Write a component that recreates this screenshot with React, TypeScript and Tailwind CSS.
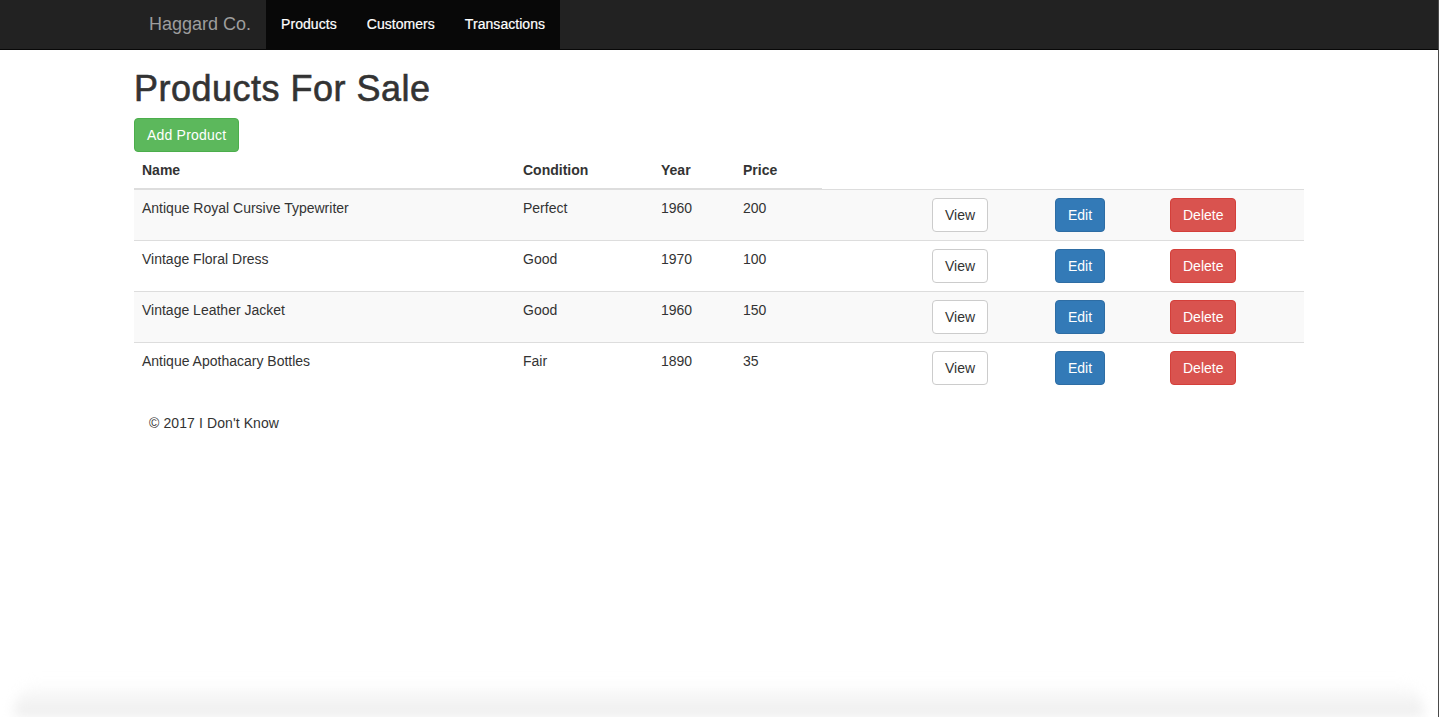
const products = [
  { name: 'Antique Royal Cursive Typewriter', condition: 'Perfect', year: 1960, price: 200 },
  { name: 'Vintage Floral Dress', condition: 'Good', year: 1970, price: 100 },
  { name: 'Vintage Leather Jacket', condition: 'Good', year: 1960, price: 150 },
  { name: 'Antique Apothacary Bottles', condition: 'Fair', year: 1890, price: 35 },
];

const btn = 'inline-block rounded-[4px] border px-[12px] py-[6px] text-[14px] leading-[20px]';

export default function App() {
  return (
    <div className="flex min-h-screen bg-white font-['Liberation_Sans',Arial,sans-serif] text-[14px] leading-[20px] text-[#333]">
      <div className="relative w-[1438px]">
        {/* navbar */}
        <nav className="h-[50px] border-b border-[#080808] bg-[#222]">
          <div className="mx-auto flex h-[49px] w-[1170px]">
            <a className="px-[15px] text-[18px] leading-[49px] text-[#9d9d9d]">Haggard Co.</a>
            <ul className="flex bg-[#080808]">
              <li><a className="block px-[15px] leading-[49px] tracking-[0.05px] text-white [-webkit-text-stroke:0.2px_#fff]">Products</a></li>
              <li><a className="block px-[15px] leading-[49px] tracking-[0.05px] text-white [-webkit-text-stroke:0.2px_#fff]">Customers</a></li>
              <li><a className="block px-[15px] leading-[49px] tracking-[0.05px] text-white [-webkit-text-stroke:0.2px_#fff]">Transactions</a></li>
            </ul>
          </div>
        </nav>

        <main className="mx-auto w-[1170px]">
          <h1 className="mt-[19px] mb-[10px] text-[36px] leading-[39px] font-medium tracking-[0.5px] [-webkit-text-stroke:0.6px_#333]">Products For Sale</h1>
          <button className={`${btn} border-[#4cae4c] bg-[#5cb85c] tracking-[0.2px] text-white`}>Add Product</button>

          <table className="mb-[20px] w-full border-collapse text-left">
            <colgroup>
              <col className="w-[381px]" />
              <col className="w-[138px]" />
              <col className="w-[82px]" />
              <col className="w-[87px]" />
              <col className="w-[102px]" />
              <col className="w-[123px]" />
              <col className="w-[115px]" />
              <col className="w-[142px]" />
            </colgroup>
            <thead>
              <tr>
                {['Name', 'Condition', 'Year', 'Price'].map(h => (
                  <th key={h} className="border-b-2 border-[#ddd] p-[8px] align-bottom font-bold">{h}</th>
                ))}
              </tr>
            </thead>
            <tbody>
              {products.map((p, i) => (
                <tr key={p.name} className={i % 2 === 0 ? 'bg-[#f9f9f9]' : ''}>
                  <td className="border-t border-[#ddd] p-[8px] align-top">{p.name}</td>
                  <td className="border-t border-[#ddd] p-[8px] align-top">{p.condition}</td>
                  <td className="border-t border-[#ddd] p-[8px] align-top">{p.year}</td>
                  <td className="border-t border-[#ddd] p-[8px] align-top">{p.price}</td>
                  <td className="border-t border-[#ddd] p-[8px] align-top"></td>
                  <td className="border-t border-[#ddd] p-[8px] align-top">
                    <button className={`${btn} border-[#ccc] bg-white text-[#333]`}>View</button>
                  </td>
                  <td className="border-t border-[#ddd] p-[8px] align-top">
                    <button className={`${btn} border-[#2e6da4] bg-[#337ab7] text-white`}>Edit</button>
                  </td>
                  <td className="border-t border-[#ddd] p-[8px] align-top">
                    <button className={`${btn} border-[#d43f3a] bg-[#d9534f] text-white`}>Delete</button>
                  </td>
                </tr>
              ))}
            </tbody>
          </table>

          <footer className="px-[15px]">
            <p className="tracking-[0.1px]">&copy; 2017 I Don't Know</p>
          </footer>
        </main>

        {/* window shadow along the bottom edge */}
        <div className="pointer-events-none fixed bottom-0 left-[14px] h-[36px] w-[1410px] rounded-t-[30px] bg-gradient-to-b from-transparent to-[#ececec] blur-[6px]" />
      </div>
      <div className="w-px bg-[#4a4a4a]" />
      <div className="w-px bg-white" />
    </div>
  );
}
